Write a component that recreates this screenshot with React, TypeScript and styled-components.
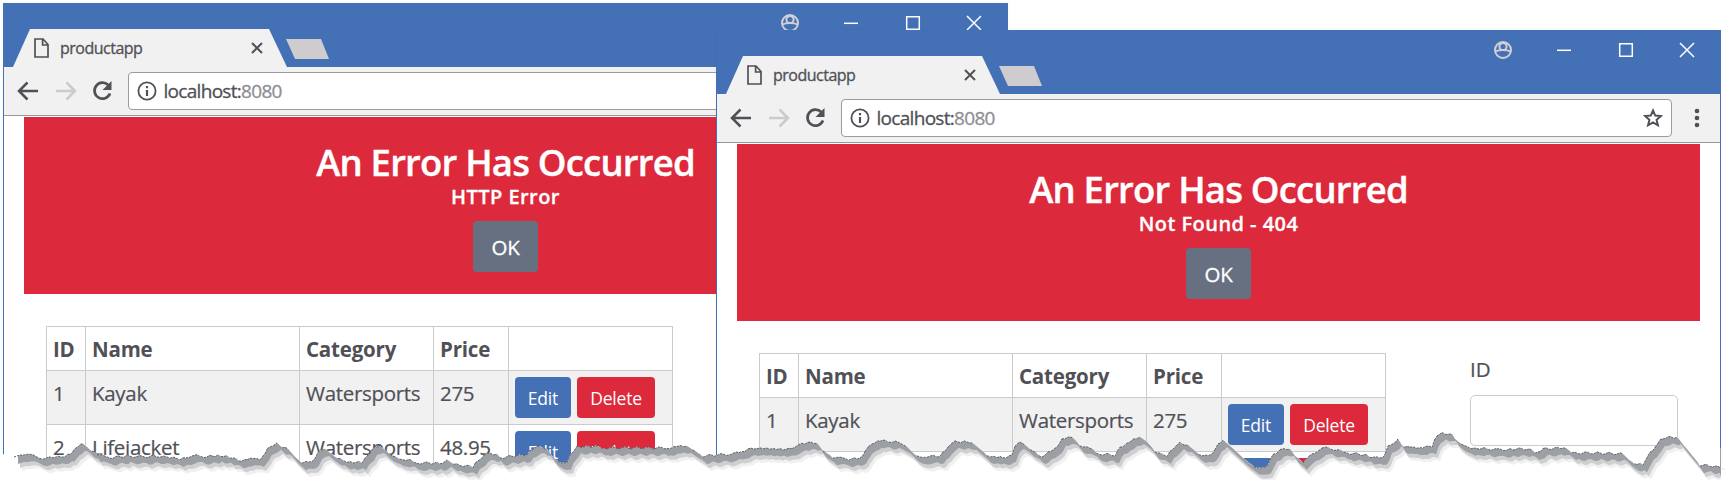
import React from "react";
import styled, { createGlobalStyle } from "styled-components";

const blue = "#4470b5";
const red = "#dc293b";
const ink = "#505056";
const line = "#cbcbcd";
const chrome = "#f1f1f2";

const GlobalStyle = createGlobalStyle`
  * { box-sizing: border-box; }
  body { margin: 0; background: #fff; overflow: hidden; }
`;

const Desktop = styled.main`
  position: relative;
  width: 1725px;
  height: 480px;
  overflow: hidden;
  background: #fff;
  color: ${ink};
  font-family: "Open Sans", "Noto Sans", sans-serif;
`;

const Window = styled.section<{ $x: number; $y: number }>`
  position: absolute;
  left: ${(p) => p.$x}px;
  top: ${(p) => p.$y}px;
  width: 1005px;
  height: 480px;
  background: #fff;
  border: solid ${blue};
  border-width: 0 1px;
  box-shadow: 0 0 3px rgba(0, 0, 0, 0.05);
`;

const TitleBar = styled.header`
  display: flex;
  justify-content: space-between;
  height: 64px;
  padding: 0 23px 0 9px;
  background: ${blue};
`;

const Tabs = styled.div`
  display: flex;
  align-items: flex-end;
`;

const Tab = styled.div`
  display: flex;
  align-items: center;
  width: 275px;
  height: 38px;
  padding: 0 25px 0 21px;
  background: ${chrome};
  clip-path: polygon(17px 0, 256px 0, 274px 100%, 0 100%);
`;

const TabTitle = styled.span`
  flex: 1;
  padding-left: 11px;
  font-size: 16px;
  line-height: 20px;
  letter-spacing: -0.5px;
  -webkit-text-stroke: 0.3px;
`;

const NewTab = styled.div`
  width: 43px;
  height: 20px;
  margin: 0 0 8px -2px;
  background: #cecccf;
  clip-path: polygon(0 0, 35px 0, 43px 100%, 9px 100%);
`;

const Controls = styled.div`
  display: flex;
  gap: 41.5px;
  padding-top: 10px;
`;

const Toolbar = styled.nav`
  display: flex;
  align-items: center;
  height: 49px;
  padding: 0 20px 0 13px;
  background: ${chrome};
  border-bottom: 1px solid #98989c;
`;

const NavIcons = styled.div`
  display: flex;
  gap: 14px;
  width: 110.5px;
`;

const AddressBar = styled.div`
  display: flex;
  align-items: center;
  width: 831px;
  height: 38px;
  padding: 0 8px;
  background: #fff;
  border: 1.5px solid #9b9ba0;
  border-radius: 4px;
`;

const Url = styled.span`
  flex: 1;
  padding-left: 7px;
  font-size: 19px;
  line-height: 24px;
  letter-spacing: -0.7px;
  -webkit-text-stroke: 0.3px;
`;

const Port = styled.span`
  color: #8e8e93;
`;

const MenuSlot = styled.div`
  display: flex;
  margin-left: auto;
`;

const Page = styled.div`
  padding: 1px 20px 0;
`;

const Alert = styled.div`
  display: flex;
  flex-direction: column;
  align-items: center;
  height: 177px;
  padding-top: 21px;
  background: ${red};
  color: #fff;
`;

const AlertTitle = styled.h1`
  margin: 0;
  font-size: 36.5px;
  font-weight: 600;
  line-height: 48px;
  letter-spacing: -0.8px;
  -webkit-text-stroke: 0.4px;
`;

const AlertText = styled.p`
  margin: 0;
  padding-top: 1px;
  font-size: 20px;
  font-weight: 600;
  line-height: 20px;
  letter-spacing: 0.45px;
  -webkit-text-stroke: 0.3px;
`;

const OkButton = styled.button`
  width: 65px;
  height: 51px;
  margin-top: 14px;
  padding: 0;
  border: 0;
  border-radius: 4px;
  background: #667080;
  color: #fff;
  font: 400 20.5px "Open Sans", sans-serif;
  letter-spacing: -0.3px;
  -webkit-text-stroke: 0.3px;
`;

const Columns = styled.div`
  display: flex;
  padding: 32px 0 0 22px;
`;

const Table = styled.table`
  width: 626px;
  table-layout: fixed;
  border-collapse: collapse;
  font-size: 20.5px;
`;

const HeadCell = styled.th<{ $width: number }>`
  width: ${(p) => p.$width}px;
  height: 44px;
  padding: 0 6px;
  border: 1px solid ${line};
  font-weight: 700;
  letter-spacing: -0.2px;
  text-align: left;
  white-space: nowrap;
`;

const Row = styled.tr<{ $shaded: boolean }>`
  height: 54px;
  background: ${(p) => (p.$shaded ? chrome : "#fff")};
`;

const Cell = styled.td`
  padding: 9px 6px 0;
  border: 1px solid ${line};
  line-height: 27px;
  letter-spacing: -0.3px;
  vertical-align: top;
  white-space: nowrap;
  -webkit-text-stroke: 0.2px;
`;

const ActionCell = styled.td`
  padding: 6px 6px 0;
  border: 1px solid ${line};
  vertical-align: top;
`;

const Actions = styled.div`
  display: flex;
  gap: 6px;
`;

const SmallButton = styled.button<{ $danger?: boolean }>`
  width: ${(p) => (p.$danger ? 78 : 56)}px;
  height: 41px;
  padding: 1px 0 0;
  border: 0;
  border-radius: 4px;
  background: ${(p) => (p.$danger ? red : blue)};
  color: #fff;
  font: 400 17.5px "Open Sans", sans-serif;
  letter-spacing: -0.2px;
`;

const Form = styled.div`
  display: flex;
  flex-direction: column;
  gap: 12px;
  margin-left: 84px;
  padding-top: 3px;
`;

const Label = styled.label`
  font-size: 20.5px;
  line-height: 27px;
  -webkit-text-stroke: 0.2px;
`;

const Input = styled.input`
  width: 208px;
  height: 51px;
  background: #fff;
  border: 1.5px solid ${line};
  border-radius: 5px;
`;

const Tear = styled.svg`
  position: absolute;
  left: 0;
  top: 0;
`;

const FileIcon = () => (
  <svg width="15" height="20" viewBox="0 0 15 20" fill="none" stroke={ink} strokeWidth="1.7">
    <path d="M1 1H9L14 6.5V19H1Z M8.6 1V7H14" />
  </svg>
);

const CloseTabIcon = () => (
  <svg width="12" height="12" viewBox="0 0 12 12" stroke={ink} strokeWidth="2">
    <path d="M1 1L11 11M11 1L1 11" />
  </svg>
);

const UserIcon = () => (
  <svg width="20" height="20" viewBox="0 0 20 20" fill="none" stroke="#d2d0d4" strokeWidth="2">
    <circle cx="10" cy="10" r="8" />
    <circle cx="10" cy="6.5" r="3.6" />
    <path d="M2.5 11.5C6 9.5 14 9.5 17.5 11.5" />
  </svg>
);

const WindowIcon = ({ d }: { d: string }) => (
  <svg width="20" height="20" viewBox="0 0 20 20" fill="none" stroke="#fff" strokeWidth="1.5">
    <path d={d} />
  </svg>
);

const ArrowIcon = ({ forward }: { forward?: boolean }) => (
  <svg width="23" height="22" viewBox="0 0 23 22" fill="none" stroke={forward ? "#cbcbce" : ink} strokeWidth="2.5">
    <path d={forward ? "M2 11H20M12.5 2.5L21 11L12.5 19.5" : "M21 11H3M10.5 2.5L2 11L10.5 19.5"} />
  </svg>
);

const ReloadIcon = () => (
  <svg width="22" height="22" viewBox="0 0 22 22">
    <path d="M17.2 5A8 8 0 1 0 19 13.5" fill="none" stroke={ink} strokeWidth="2.7" />
    <path d="M20.5 1V10H11.5Z" fill={ink} />
  </svg>
);

const InfoIcon = () => (
  <svg width="20" height="20" viewBox="0 0 20 20" fill="none" stroke={ink}>
    <circle cx="10" cy="10" r="8.6" strokeWidth="1.8" />
    <path d="M10 9V15M10 5V7.3" strokeWidth="2.2" />
  </svg>
);

const StarIcon = () => (
  <svg width="20" height="20" viewBox="0 0 20 20" fill="none" stroke={ink} strokeWidth="2">
    <path d="M10 2.5L12.2 7.6L17.8 8.1L13.6 11.8L14.9 17.3L10 14.4L5.1 17.3L6.4 11.8L2.2 8.1L7.8 7.6Z" />
  </svg>
);

const MenuIcon = () => (
  <svg width="6" height="20" viewBox="0 0 6 20" fill={ink}>
    <circle cx="3" cy="3" r="2.3" />
    <circle cx="3" cy="10" r="2.3" />
    <circle cx="3" cy="17" r="2.3" />
  </svg>
);

const products = [
  { id: 1, name: "Kayak", category: "Watersports", price: "275" },
  { id: 2, name: "Lifejacket", category: "Watersports", price: "48.95" },
];

const BrowserWindow = ({ x, y, message }: { x: number; y: number; message: string }) => (
  <Window $x={x} $y={y}>
    <TitleBar>
      <Tabs>
        <Tab>
          <FileIcon />
          <TabTitle>productapp</TabTitle>
          <CloseTabIcon />
        </Tab>
        <NewTab />
      </Tabs>
      <Controls>
        <UserIcon />
        <WindowIcon d="M3 10.3H17" />
        <WindowIcon d="M3.7 3.7H16.3V16.3H3.7Z" />
        <WindowIcon d="M3 3L17 17M17 3L3 17" />
      </Controls>
    </TitleBar>
    <Toolbar>
      <NavIcons>
        <ArrowIcon />
        <ArrowIcon forward />
        <ReloadIcon />
      </NavIcons>
      <AddressBar>
        <InfoIcon />
        <Url>
          localhost:<Port>8080</Port>
        </Url>
        <StarIcon />
      </AddressBar>
      <MenuSlot>
        <MenuIcon />
      </MenuSlot>
    </Toolbar>
    <Page>
      <Alert>
        <AlertTitle>An Error Has Occurred</AlertTitle>
        <AlertText>{message}</AlertText>
        <OkButton>OK</OkButton>
      </Alert>
      <Columns>
        <Table>
          <thead>
            <tr>
              <HeadCell $width={39}>ID</HeadCell>
              <HeadCell $width={214}>Name</HeadCell>
              <HeadCell $width={134}>Category</HeadCell>
              <HeadCell $width={75}>Price</HeadCell>
              <HeadCell $width={164} />
            </tr>
          </thead>
          <tbody>
            {products.map((p, i) => (
              <Row key={p.id} $shaded={i % 2 === 0}>
                <Cell>{p.id}</Cell>
                <Cell>{p.name}</Cell>
                <Cell>{p.category}</Cell>
                <Cell>{p.price}</Cell>
                <ActionCell>
                  <Actions>
                    <SmallButton>Edit</SmallButton>
                    <SmallButton $danger>Delete</SmallButton>
                  </Actions>
                </ActionCell>
              </Row>
            ))}
          </tbody>
        </Table>
        <Form>
          <Label>ID</Label>
          <Input />
        </Form>
      </Columns>
    </Page>
  </Window>
);

const edge: number[][] = [
  [0, 454], [13, 455], [14, 457], [23, 454], [33, 456], [43, 458], [55, 458], [68, 455], [73, 452], [78, 446], [83, 444],
  [87, 447], [92, 452], [97, 454], [107, 458], [127, 456], [143, 457], [157, 456], [170, 458], [183, 459], [192, 455],
  [207, 457], [218, 455], [230, 457], [242, 462], [250, 457], [260, 461], [265, 453], [270, 446], [277, 444], [288, 449],
  [295, 457], [302, 463], [312, 462], [318, 453], [325, 449], [330, 453], [338, 459], [350, 462], [362, 462], [367, 456],
  [373, 449], [380, 446], [387, 452], [393, 457], [403, 459], [420, 463], [440, 463], [447, 461], [460, 465], [473, 467],
  [478, 460], [487, 454], [497, 454], [500, 458], [520, 455], [527, 455], [532, 449], [540, 447], [547, 449], [552, 456],
  [558, 462], [567, 462], [572, 452], [577, 447], [590, 446], [607, 448], [643, 448], [667, 448], [677, 447], [687, 446],
  [693, 450], [703, 456], [717, 455], [733, 454], [742, 451], [760, 447], [770, 450], [780, 448], [787, 450], [795, 446],
  [808, 443], [817, 443], [823, 451], [833, 457], [843, 459], [860, 459], [865, 452], [872, 443], [883, 441], [898, 442],
  [907, 447], [917, 457], [927, 456], [940, 457], [945, 450], [955, 442], [967, 441], [975, 445], [987, 455], [997, 458],
  [1012, 456], [1015, 447], [1020, 442], [1025, 445], [1033, 452], [1042, 456], [1048, 453], [1058, 445], [1062, 438],
  [1073, 438], [1080, 445], [1090, 449], [1100, 454], [1115, 455], [1120, 447], [1130, 442], [1140, 437], [1147, 442],
  [1155, 451], [1167, 457], [1173, 448], [1180, 443], [1188, 445], [1202, 457], [1212, 453], [1218, 445], [1223, 440],
  [1230, 446], [1243, 458], [1257, 469], [1267, 465], [1273, 455], [1280, 450], [1290, 449], [1295, 456], [1303, 462],
  [1312, 455], [1322, 447], [1337, 450], [1347, 453], [1367, 455], [1373, 458], [1383, 457], [1388, 447], [1398, 439],
  [1402, 445], [1410, 448], [1420, 447], [1432, 447], [1437, 435], [1442, 433], [1452, 434], [1455, 439], [1465, 447],
  [1477, 448], [1500, 450], [1513, 449], [1527, 449], [1538, 453], [1543, 449], [1563, 448], [1575, 453], [1597, 453],
  [1623, 454], [1632, 463], [1643, 464], [1650, 453], [1658, 443], [1663, 438], [1677, 437], [1685, 447], [1700, 465],
  [1707, 465], [1721, 468],
];

// Small ragged steps added between the main points of the tear.
const ragged: number[][] = edge.flatMap(([x, y], i) => {
  const next = edge[i + 1];
  if (!next) return [[x, y]];
  const steps = Math.max(1, Math.round((next[0] - x) / 3));
  const falling = (next[1] - y) / (next[0] - x) > 0.5;
  return Array.from({ length: steps }, (_, k) => {
    const t = k / steps;
    const jitter = falling || x < 15 ? 0 : Math.sin(x * 12.9 + k * 4.7) * 1.2;
    return [x + (next[0] - x) * t, y + (next[1] - y) * t + jitter];
  });
});

const toPath = (list: number[][]) => list.map(([x, y]) => `${x.toFixed(1)} ${y.toFixed(1)}`).join("L");
const above = `M14 400L${toPath(ragged.filter(([x]) => x >= 14))}L1721 400Z`;
const below = `M0 480L${toPath(ragged)}L1725 470L1725 480Z`;
const rim = ragged
  .slice(0, -1)
  .map(([x, y], i) => {
    const [nx, ny] = ragged[i + 1];
    return x < 14 || (ny - y) / (nx - x) > 0.6 ? "" : `M${x.toFixed(1)} ${y.toFixed(1)}L${nx.toFixed(1)} ${ny.toFixed(1)}`;
  })
  .join("");

const TornEdge = () => (
  <Tear width="1725" height="480" viewBox="0 0 1725 480">
    <clipPath id="torn">
      <path d={below} />
    </clipPath>
    <path d={below} fill="#fff" />
    <g clipPath="url(#torn)">
      <path d={above} fill="#f0f0f1" transform="translate(8 14)" />
      <path d={above} fill="#cfcfd1" transform="translate(6 11)" />
      <path d={above} fill="#9c9fa3" transform="translate(4 7)" />
      <path d="M1721 440H1725V480H1721Z" fill="#fff" />
    </g>
    <path d="M1720.5 448V475" stroke="#9c9fa3" />
    <path d={rim} fill="none" stroke="#606167" strokeWidth="1" strokeDasharray="2 1.3" />
  </Tear>
);

export default function App() {
  return (
    <Desktop>
      <GlobalStyle />
      <BrowserWindow x={3} y={3} message="HTTP Error" />
      <BrowserWindow x={716} y={30} message="Not Found - 404" />
      <TornEdge />
    </Desktop>
  );
}
